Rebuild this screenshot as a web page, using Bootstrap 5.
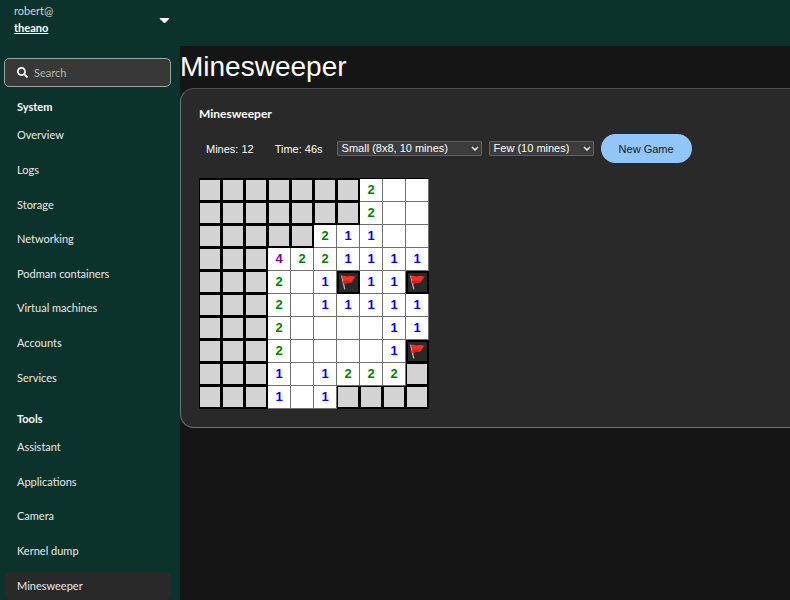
<!DOCTYPE html>
<html lang="en" data-bs-theme="dark">
<head>
<meta charset="utf-8">
<meta name="viewport" content="width=device-width, initial-scale=1">
<title>Minesweeper - theano</title>
<link href="https://cdn.jsdelivr.net/npm/bootstrap@5.3.0/dist/css/bootstrap.min.css" rel="stylesheet">
<style>
body { background: #0c322c; color: #fff; font: 11px/16px "Liberation Sans", Arial, sans-serif; }
.side { flex: 0 0 180px; min-width: 0; font-family: Lato, sans-serif; font-size: 11px; color: #e8eceb; }
.host { height: 46px; padding: 2px 10px 0 14px; color: inherit; line-height: 17px; background: none; border: 0; }
.host-user { color: #cfd8d6; }
.host-name { color: #fff; }
.host svg { margin-top: 14px; }
.finder { height: 29px; margin: 12px 9px 0 4px; padding: 0 12px; gap: 6px; background: #383838; border: 1px solid #a3a3a3; border-radius: 5px; }
.finder input { min-width: 0; color: #fff; background: none; border: 0; outline: 0; padding: 0; }
.finder input::placeholder { color: #b5b5b5; opacity: 1; }
.nav-groups { padding-top: 11px; }
.menu-title { font-size: 11px; line-height: 17px; font-weight: 700; margin: 0; padding-left: 17px; color: #fff; }
.menu { display: grid; grid-auto-rows: 1fr; align-items: center; padding: 0 9px 0 5px; margin: 3px 0 0; }
.menu-system { height: 277px; margin-bottom: 15px; }
.menu-tools { height: 173px; }
.menu a { display: block; padding: 0 12px; line-height: 28px; color: #eaeaea; text-decoration: none; border-radius: 5px; }
.menu a.active { background: #292929; }
.content { margin-top: 46px; background: #151515; min-width: 0; }
.page-title { font-size: 28px; line-height: 42px; font-weight: 400; margin: 0; }
.game { background: #292929; border: 1px solid #707070; border-top-color: #4d4d4d; border-right: 0; border-radius: 14px 0 0 14px; padding: 15px 18px 18px; }
.game-title { font: 700 12px/20px Lato, sans-serif; margin: 0 0 10px; }
.controls { gap: 7px; margin-bottom: 15px; }
.stat { padding: 0 7px; }
.pick { height: 15px; padding: 0 16px 0 4px; font-size: 11px; line-height: 13px; color: #fff; border: 1px solid #606060; border-radius: 1px; appearance: none;
  background: #3c3c3c url("data:image/svg+xml,%3Csvg xmlns='http://www.w3.org/2000/svg' viewBox='0 0 8 6'%3E%3Cpath d='M1 1l3 3 3-3' fill='none' stroke='white' stroke-width='1.4'/%3E%3C/svg%3E") no-repeat right 2px center / 8px 6px; }
.pick-size { width: 145px; }
.pick-mines { width: 105px; }
.btn-new { height: 29px; padding: 0 18px; font-size: 11px; line-height: 16px; color: #151515; background: #92c5f9; border: 0; border-radius: 15px; }
.btn-new:hover { background: #b9dafc; color: #151515; }
.board { display: grid; grid-template-columns: repeat(10, 23px); grid-auto-rows: 23px; width: max-content; border-top: 1px solid #000; }
.cell { display: flex; align-items: center; justify-content: center; padding: 0; border: 0 solid #707070; border-radius: 0; background: #fff; font-size: 13px; line-height: 16px; font-weight: 700; }
.line-r { border-right-width: 1px; }
.line-b { border-bottom-width: 1px; }
.closed { background: #d3d3d3; border-color: #000; border-width: 1px 2px 2px 1px; }
.flagged { background: #292929; border-color: #000; border-width: 2px; }
.n1 { color: #0000ff; }
.n2 { color: #008000; }
.n4 { color: #800080; }
</style>
<script src="https://cdn.jsdelivr.net/npm/bootstrap@5.3.0/dist/js/bootstrap.bundle.min.js"></script>
</head>
<body>
<div class="d-flex vh-100 overflow-hidden">
  <aside class="side">
    <button type="button" class="host d-flex w-100 justify-content-between align-items-start text-start" aria-label="Switch host">
      <span><span class="host-user d-block">robert@</span><span class="host-name d-block fw-bold text-decoration-underline">theano</span></span>
      <svg width="12" height="8" viewBox="0 0 12 8" aria-hidden="true"><path d="M2 2.500h9L6.500 7z" fill="#fff" stroke="#fff" stroke-linejoin="round"/></svg>
    </button>
    <label class="finder d-flex align-items-center">
      <svg class="flex-shrink-0" width="11" height="11" viewBox="0 0 512 512" aria-hidden="true"><path fill="#fff" d="M505 442.700L405.300 343c-4.500-4.500-10.600-7-17-7H372c27.600-35.300 44-79.700 44-128C416 93.100 322.900 0 208 0S0 93.100 0 208s93.100 208 208 208c48.300 0 92.700-16.400 128-44v16.300c0 6.400 2.500 12.500 7 17l99.700 99.700c9.400 9.400 24.600 9.400 33.900 0l28.300-28.300c9.400-9.400 9.400-24.600.1-34zM208 336c-70.700 0-128-57.200-128-128 0-70.700 57.200-128 128-128 70.700 0 128 57.200 128 128 0 70.700-57.200 128-128 128z"/></svg>
      <input type="search" class="flex-grow-1" placeholder="Search" aria-label="Search">
    </label>
    <nav class="nav-groups" aria-label="Main">
      <h2 class="menu-title">System</h2>
      <ul class="menu menu-system list-unstyled">
        <li><a href="#">Overview</a></li>
        <li><a href="#">Logs</a></li>
        <li><a href="#">Storage</a></li>
        <li><a href="#">Networking</a></li>
        <li><a href="#">Podman containers</a></li>
        <li><a href="#">Virtual machines</a></li>
        <li><a href="#">Accounts</a></li>
        <li><a href="#">Services</a></li>
      </ul>
      <h2 class="menu-title">Tools</h2>
      <ul class="menu menu-tools list-unstyled">
        <li><a href="#">Assistant</a></li>
        <li><a href="#">Applications</a></li>
        <li><a href="#">Camera</a></li>
        <li><a href="#">Kernel dump</a></li>
        <li><a href="#" class="active" aria-current="page">Minesweeper</a></li>
      </ul>
    </nav>
  </aside>
  <main class="content flex-grow-1">
    <h1 class="page-title">Minesweeper</h1>
    <section class="game">
      <h2 class="game-title">Minesweeper</h2>
      <div class="controls d-flex align-items-center">
        <span class="stat">Mines: 12</span>
        <span class="stat">Time: 46s</span>
        <select class="pick pick-size" aria-label="Board size"><option>Small (8x8, 10 mines)</option></select>
        <select class="pick pick-mines" aria-label="Number of mines"><option>Few (10 mines)</option></select>
        <button type="button" class="btn btn-new">New Game</button>
      </div>
      <div class="board" id="board"></div>
    </section>
  </main>
</div>
<script>
// '#' closed, 'F' flagged, '.' opened with no neighbouring mines
const rows = [
  "#######2..",
  "#######2..",
  "#####211..",
  "###4221111",
  "###2.1F11F",
  "###2.11111",
  "###2....11",
  "###2....1F",
  "###1.1222#",
  "###1.1####"
];
const flag = '<svg width="17" height="17" viewBox="0 0 16 16" aria-hidden="true"><path d="M1.500 1.500l3 13" stroke="#b8bec2" stroke-width="1.200" fill="none"/><path d="M2 2.300C4 .8 6 3 8 2.200S12 2 15 2.500C13 4 12.500 5 11.500 7S7 7.500 3.500 9.500z" fill="#ff2d24"/><path d="M3 6.800C6 5 8 6.500 11.500 7S7 7.500 3.500 9.500z" fill="#dd1f1a"/></svg>';
const labels = { "#": "Closed", "F": "Flag", ".": "Empty" };
const board = document.getElementById("board");
rows.forEach(row => [...row].forEach(ch => {
  const cell = document.createElement("button");
  cell.type = "button";
  cell.className = "cell";
  if (ch === "#") cell.classList.add("closed");
  else if (ch === "F") { cell.classList.add("flagged"); cell.innerHTML = flag; }
  else {
    cell.classList.add("line-r", "line-b");
    if (ch !== ".") { cell.classList.add("n" + ch); cell.textContent = ch; }
  }
  cell.setAttribute("aria-label", labels[ch] || ch);
  board.append(cell);
}));
</script>
</body>
</html>
